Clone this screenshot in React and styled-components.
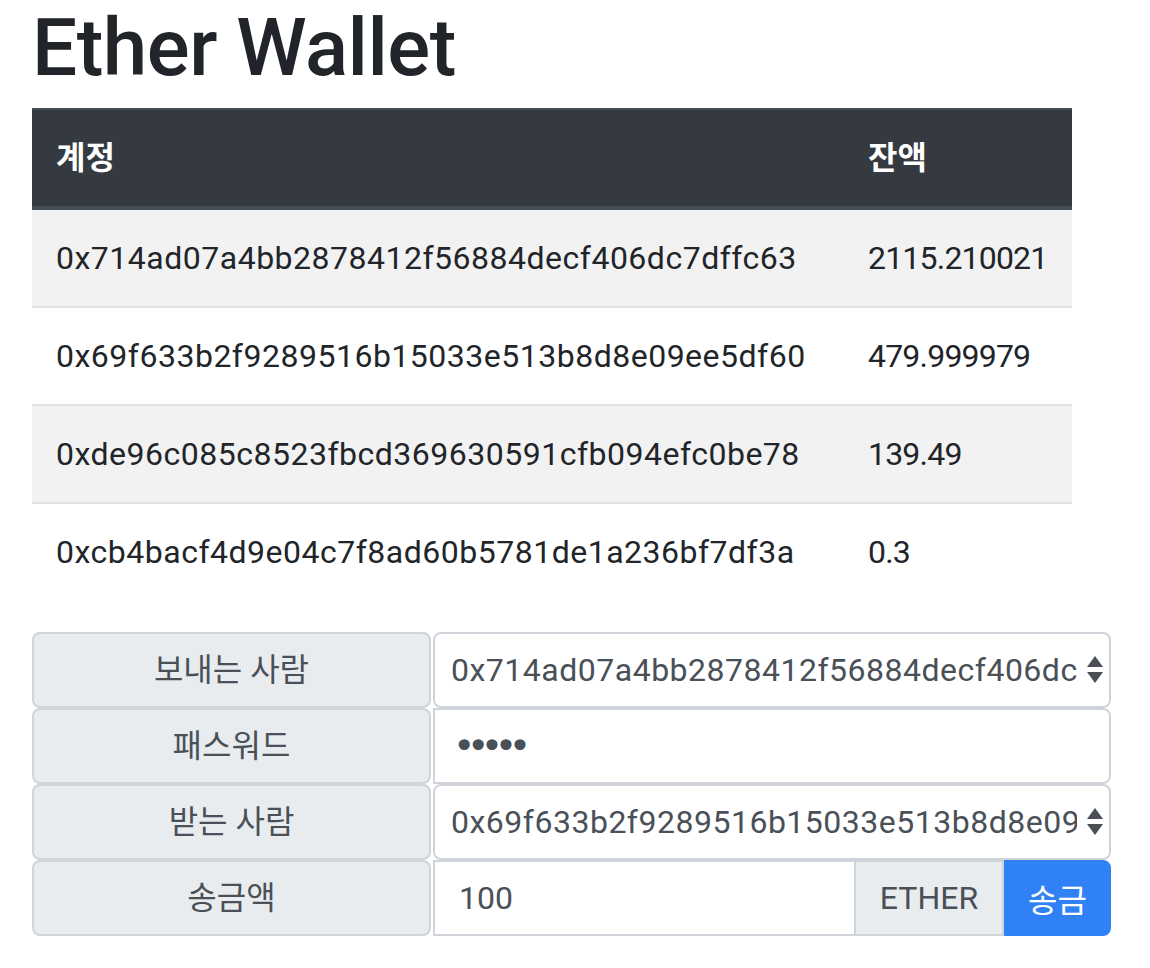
import React, { Component } from 'react'
import styled, { createGlobalStyle } from 'styled-components'

const accounts = [
  { address: '0x714ad07a4bb2878412f56884decf406dc7dffc63', balance: '2115.210021' },
  { address: '0x69f633b2f9289516b15033e513b8d8e09ee5df60', balance: '479.999979' },
  { address: '0xde96c085c8523fbcd369630591cfb094efc0be78', balance: '139.49' },
  { address: '0xcb4bacf4d9e04c7f8ad60b5781de1a236bf7df3a', balance: '0.3' }
]

const GlobalStyle = createGlobalStyle`
  body {
    margin: 0;
    background: #fff;
    color: #212529;
    font-family: Roboto, "Noto Sans CJK KR", sans-serif;
  }
`

const SelectArrows = () => (
  <Arrows width="16" height="28" viewBox="0 0 16 28">
    <path d="M8 0 L16 11 L0 11 Z" fill="#4a4f55" />
    <path d="M0 16 L16 16 L8 27 Z" fill="#4a4f55" />
  </Arrows>
)

class App extends Component {
  constructor(props) {
    super(props)
    this.state = {
      from: accounts[0].address,
      to: accounts[1].address,
      password: '12345',
      amount: '100'
    }
  }

  handleChange = e => {
    this.setState({ [e.target.name]: e.target.value })
  }

  render() {
    return (<Page>
      <GlobalStyle />
      <Title>Ether Wallet</Title>

      <Table>
        <colgroup>
          <col style={{ width: 812 }} />
          <col />
        </colgroup>
        <thead>
          <tr>
            <HeadCell>계정</HeadCell>
            <HeadCell>잔액</HeadCell>
          </tr>
        </thead>
        <tbody>
          {accounts.map((account, i) => (
            <Row key={account.address} striped={i % 2 === 0}>
              <Cell address>{account.address}</Cell>
              <Cell>{account.balance}</Cell>
            </Row>
          ))}
        </tbody>
      </Table>

      <Form onSubmit={e => e.preventDefault()}>
        <Label>보내는 사람</Label>
        <SelectWrap>
          <Select name="from" value={this.state.from} onChange={this.handleChange}>
            {accounts.map(a => <option key={a.address} value={a.address}>{a.address}</option>)}
          </Select>
          <SelectArrows />
        </SelectWrap>

        <Label>패스워드</Label>
        <Input type="password" name="password" value={this.state.password} onChange={this.handleChange} rounded masked />

        <Label>받는 사람</Label>
        <SelectWrap>
          <Select name="to" value={this.state.to} onChange={this.handleChange}>
            {accounts.map(a => <option key={a.address} value={a.address}>{a.address}</option>)}
          </Select>
          <SelectArrows />
        </SelectWrap>

        <Label>송금액</Label>
        <AmountGroup>
          <Input type="text" name="amount" value={this.state.amount} onChange={this.handleChange} />
          <Unit>ETHER</Unit>
          <SendButton type="submit">송금</SendButton>
        </AmountGroup>
      </Form>
    </Page>)
  }
}

const Page = styled.div`
  padding: 0 32px 32px;
`

const Title = styled.h1`
  margin: 0 0 12px;
  font-size: 80px;
  font-weight: 500;
  line-height: 1.2;
  letter-spacing: -0.5px;
  color: #212529;
`

const Table = styled.table`
  width: 1040px;
  table-layout: fixed;
  border-collapse: collapse;
  margin-bottom: 32px;
  font-size: 32px;
  line-height: 48px;
`

const HeadCell = styled.th`
  background: #343a40;
  color: #fff;
  font-weight: 700;
  text-align: left;
  padding: 24px;
  border-top: 2px solid #454d55;
  border-bottom: 4px solid #454d55;
`

const Row = styled.tr`
  background: ${props => props.striped ? '#f2f2f2' : '#fff'};
`

const Cell = styled.td`
  padding: 24px;
  border-top: 2px solid #dee2e6;
  color: #212529;
  white-space: nowrap;
  letter-spacing: ${props => props.address ? '0.5px' : '-0.8px'};
`

const Form = styled.form`
  width: 1079px;
  display: grid;
  grid-template-columns: 399px 678px;
  column-gap: 2px;
  font-size: 32px;
`

const Label = styled.div`
  height: 76px;
  box-sizing: border-box;
  display: flex;
  align-items: center;
  justify-content: center;
  background: #e9ecef;
  border: 2px solid #ced4da;
  border-radius: 8px;
  color: #495057;
  line-height: 48px;
`

const SelectWrap = styled.div`
  position: relative;
  height: 76px;
`

const Select = styled.select`
  appearance: none;
  width: 100%;
  height: 76px;
  box-sizing: border-box;
  padding: 0 32px 0 16px;
  border: 2px solid #ced4da;
  border-radius: 8px;
  background: #fff;
  color: #495057;
  font-family: Roboto, "Noto Sans CJK KR", sans-serif;
  font-size: 32px;
  letter-spacing: 0.5px;
  outline: none;
`

const Arrows = styled.svg`
  position: absolute;
  right: 8px;
  top: 24px;
  pointer-events: none;
`

const Input = styled.input`
  flex: 1;
  min-width: 0;
  height: 76px;
  box-sizing: border-box;
  padding: 0 24px 0 ${props => props.masked ? '18px' : '24px'};
  border: 2px solid #ced4da;
  border-radius: ${props => props.rounded ? '0 8px 8px 0' : '0'};
  background: #fff;
  color: #495057;
  font-family: ${props => props.masked ? '"DejaVu Sans", sans-serif' : 'Roboto, "Noto Sans CJK KR", sans-serif'};
  font-size: ${props => props.masked ? '38px' : '32px'};
  letter-spacing: ${props => props.masked ? '-8.5px' : '0'};
  outline: none;
`

const AmountGroup = styled.div`
  display: flex;
  height: 76px;
`

const Unit = styled.span`
  display: flex;
  align-items: center;
  padding: 0 24px;
  background: #e9ecef;
  border: 2px solid #ced4da;
  border-left: 0;
  color: #495057;
`

const SendButton = styled.button`
  padding: 0 22px;
  background: #3081f6;
  border: 2px solid #3081f6;
  border-radius: 0 8px 8px 0;
  color: #fff;
  font-family: Roboto, "Noto Sans CJK KR", sans-serif;
  font-size: 32px;
  cursor: pointer;
`

export default App
